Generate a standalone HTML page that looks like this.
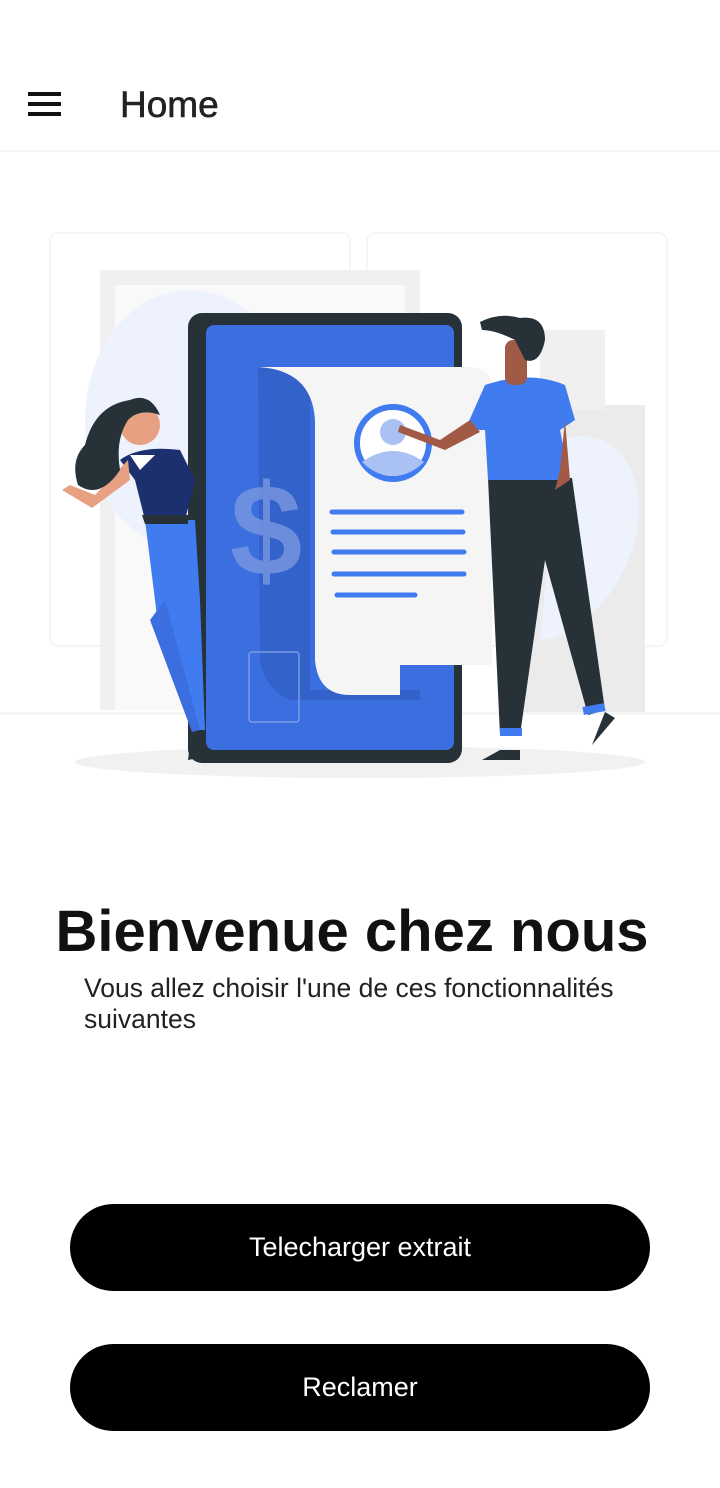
<!DOCTYPE html>
<html><head><meta charset="utf-8"><style>
*{margin:0;padding:0;box-sizing:border-box}
body{width:720px;height:1488px;background:#fff;font-family:"Liberation Sans",Arial,sans-serif;position:relative;overflow:hidden}
.hdr{position:absolute;top:0;left:0;width:720px;height:152px;background:#fff;border-bottom:2px solid #f6f6f6}
.burger{position:absolute;left:28px;top:92px;width:33px}
.burger i{display:block;height:4px;background:#111;margin-bottom:6px}
.title{position:absolute;left:120px;top:84px;font-size:37px;color:#222;-webkit-text-stroke:.6px #222}
h1{position:absolute;left:0;width:704px;text-align:center;top:898px;font-size:58px;font-weight:bold;color:#111}
.sub{position:absolute;left:84px;top:973px;font-size:26.5px;line-height:31px;color:#222;width:620px}
.btn{position:absolute;left:70px;width:580px;height:87px;border-radius:44px;background:#000;color:#fff;font-size:27px;text-align:center;line-height:87px}
</style></head><body>
<div class="hdr"><div class="burger"><i></i><i></i><i></i></div><div class="title">Home</div></div>
<svg style="position:absolute;left:0;top:0" width="720" height="800" viewBox="0 0 720 800">
<rect x="50" y="233" width="300" height="413" rx="8" fill="none" stroke="#f5f5f5" stroke-width="2"/>
<rect x="367" y="233" width="300" height="413" rx="8" fill="none" stroke="#f5f5f5" stroke-width="2"/>
<rect x="100" y="270" width="320" height="440" fill="#f0f0f0"/>
<rect x="115" y="285" width="290" height="425" fill="#f9f9f9"/>
<rect x="520" y="405" width="125" height="310" fill="#ebebeb"/>
<rect x="540" y="330" width="65" height="80" fill="#f0f0f0"/>
<rect x="0" y="712" width="720" height="3" fill="#f5f5f5"/>
<ellipse cx="190" cy="420" rx="105" ry="130" fill="#edf2fc"/>
<path d="M560 440 C620 420 650 480 635 540 C620 600 570 640 540 640 Z" fill="#edf2fc"/>
<ellipse cx="360" cy="762" rx="285" ry="16" fill="#f1f1f1"/>
<rect x="188" y="313" width="274" height="450" rx="14" fill="#263238"/>
<rect x="206" y="325" width="248" height="425" rx="8" fill="#3b6fe0"/>
<path d="M258 367 H310 V690 H420 V700 H290 Q265 690 260 660 Z" fill="#2f5cc0" opacity=".7"/>
<text x="230" y="575" font-size="130" font-weight="bold" fill="#7a98e0" opacity=".8" font-family="Liberation Sans">$</text>
<rect x="249" y="652" width="50" height="70" rx="3" fill="none" stroke="#7d9ce6" stroke-width="1.5"/>
<path d="M258 367 H470 Q492 367 492 390 V665 H400 V695 H350 Q318 695 315 660 V420 Q312 370 258 367 Z" fill="#f5f5f5"/>
<circle cx="393" cy="443" r="36" fill="#fff" stroke="#407bf0" stroke-width="6"/>
<circle cx="393" cy="432" r="13" fill="#a9c1f3"/>
<path d="M362 462 Q393 440 424 462 Q410 476 393 476 Q376 476 362 462Z" fill="#a9c1f3"/>
<g stroke="#407bf0" stroke-width="5" stroke-linecap="round">
<line x1="332" y1="512" x2="462" y2="512"/><line x1="333" y1="532" x2="463" y2="532"/><line x1="334" y1="552" x2="464" y2="552"/><line x1="334" y1="574" x2="464" y2="574"/><line x1="337" y1="595" x2="415" y2="595"/></g>
<path d="M488 478 H572 L605 710 L588 715 L545 560 L520 735 H500 Z" fill="#263238"/>
<rect x="500" y="728" width="22" height="8" fill="#407bf0"/>
<rect x="583" y="705" width="22" height="8" fill="#407bf0" transform="rotate(-10 594 709)"/>
<path d="M482 760 H520 V750 H500 Z" fill="#263238"/>
<path d="M592 745 L615 718 L605 712 Z" fill="#263238"/>
<path d="M485 385 Q530 370 565 385 L575 420 L560 430 L570 480 H488 L485 430 L465 430 Z" fill="#407bf0"/>
<path d="M470 420 L440 440 L400 425 L398 432 L445 450 L480 432 Z" fill="#a05a45"/>
<path d="M565 420 L570 480 L555 490 L560 470 Z" fill="#a05a45"/>
<rect x="505" y="340" width="22" height="45" rx="8" fill="#a05a45"/>
<path d="M480 322 Q500 312 520 318 Q545 315 545 340 Q540 365 525 360 L515 340 Q495 330 482 330 Z" fill="#263238"/>
<path d="M145 520 H195 L200 600 L205 730 H195 L160 640 Z" fill="#407bf0"/>
<path d="M165 600 L200 730 L192 732 L150 620 Z" fill="#3b6fe0"/>
<path d="M190 745 L215 755 L188 760 Z" fill="#263238"/>
<path d="M120 460 Q140 445 180 450 L195 480 L185 520 H145 L135 480 Z" fill="#1c2f6e"/>
<path d="M142 515 H188 V524 H145 Z" fill="#263238"/>
<path d="M128 460 L95 495 L70 485 L62 490 L92 508 L130 480 Z" fill="#e8a083"/>
<circle cx="140" cy="425" r="20" fill="#e8a083"/>
<path d="M130 400 Q150 392 160 415 Q140 408 128 420 Q115 440 120 470 Q100 500 78 485 Q70 460 85 445 Q95 405 130 400Z" fill="#263238"/>
<path d="M130 455 L140 470 L155 455 Z" fill="#fff"/>
</svg>
<h1>Bienvenue chez nous</h1>
<div class="sub">Vous allez choisir l'une de ces fonctionnalités suivantes</div>
<div class="btn" style="top:1204px">Telecharger extrait</div>
<div class="btn" style="top:1344px">Reclamer</div>
</body></html>
